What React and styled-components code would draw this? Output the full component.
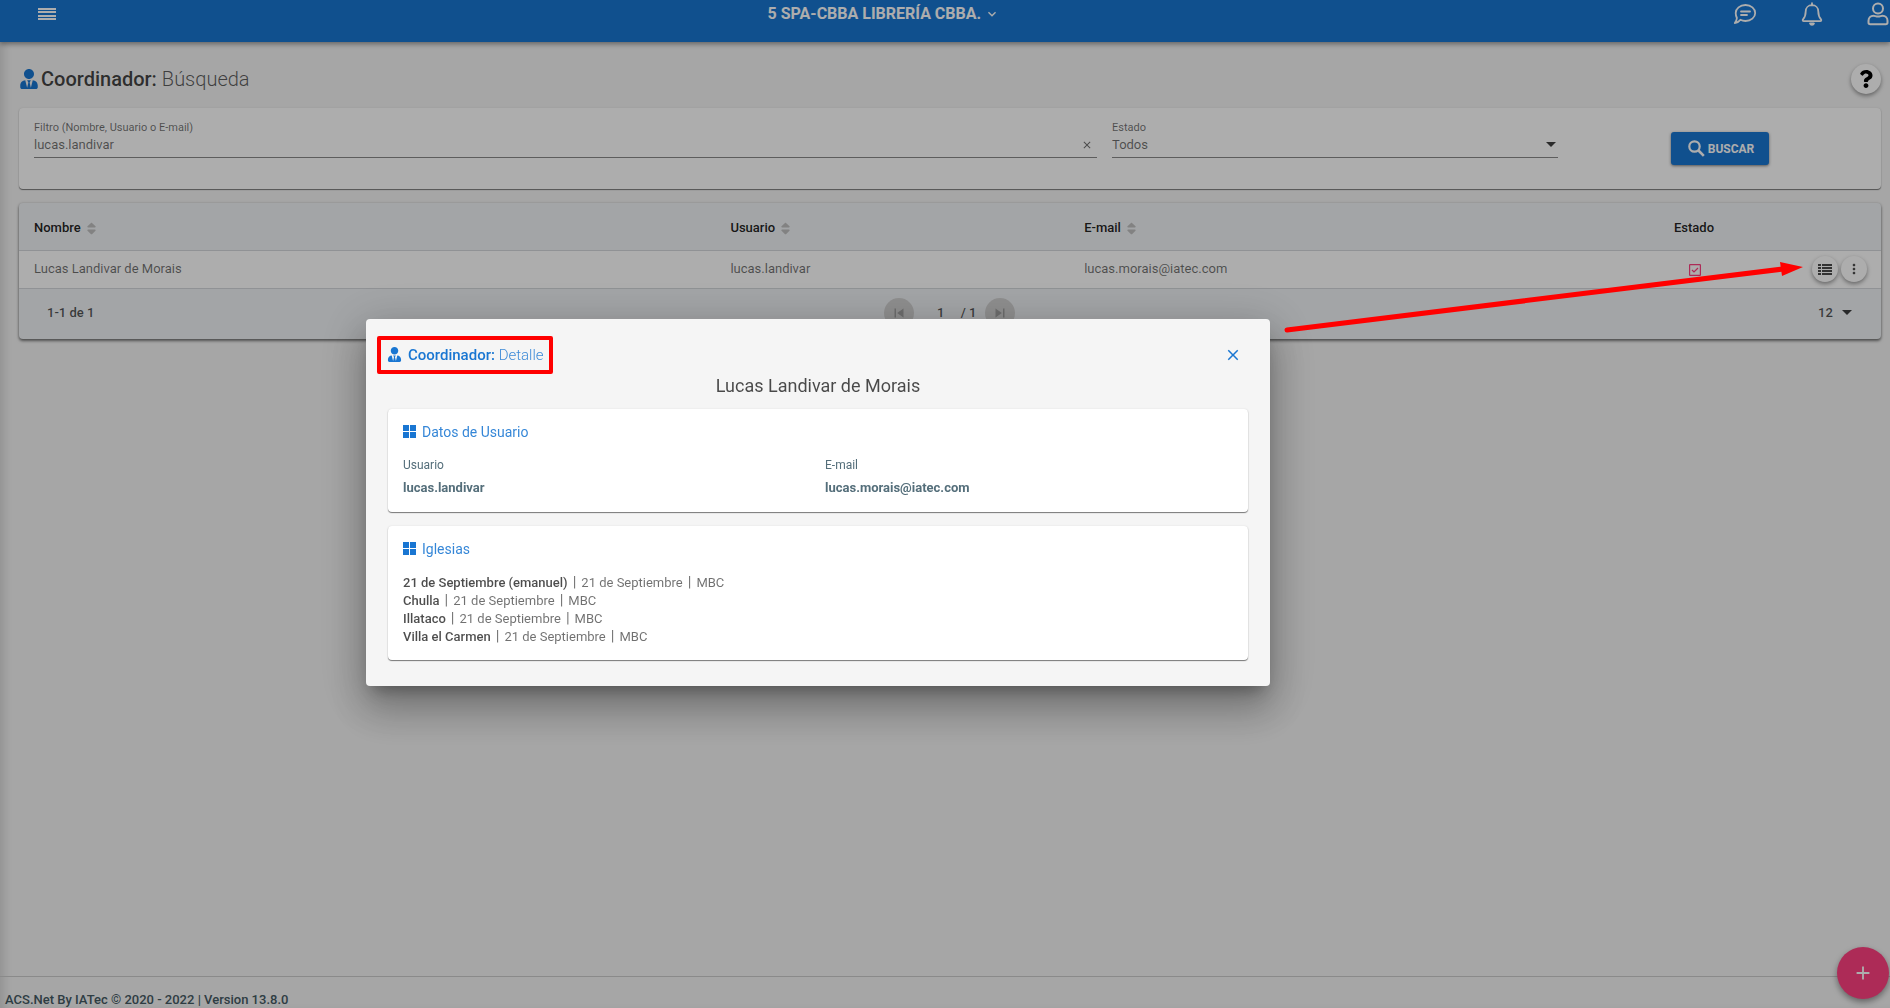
import React from "react";
import styled, { createGlobalStyle } from "styled-components";
import { FaUserTie, FaSort, FaQuestion } from "react-icons/fa";
import {
  MdMoreVert,
  MdClose,
  MdSkipPrevious,
  MdSkipNext,
  MdAdd,
  MdKeyboardArrowDown,
} from "react-icons/md";

const PRIMARY = "#1976d2";
const ACCENT = "#ff4081";
const ANNOTATION = "#ff0000";

const GlobalStyle = createGlobalStyle`
  *, *::before, *::after { box-sizing: border-box; }
  html, body { margin: 0; padding: 0; }
  body {
    background: #f5f5f5;
    color: rgba(0, 0, 0, 0.56);
    font-family: Roboto, "Liberation Sans", sans-serif;
    font-size: 13px;
    line-height: 18px;
  }
  button, input, select { font: inherit; color: inherit; }
  h1, h2, h3, p, ul, dl, dd { margin: 0; padding: 0; font-weight: 400; }
  svg { display: block; flex: none; }
`;

const Page = styled.div`
  min-height: 100vh;
  display: flex;
  flex-direction: column;
  box-shadow: inset 8px 0 10px -4px rgba(0, 0, 0, 0.12);
`;

const TopBar = styled.header`
  height: 42px;
  padding: 0 1px 14px 35px;
  display: grid;
  grid-template-columns: 736fr auto 893fr;
  align-items: center;
  background: ${PRIMARY};
  color: #fff;
  box-shadow: 0 2px 5px rgba(0, 0, 0, 0.4);
`;

const BarButton = styled.button`
  display: inline-flex;
  align-items: center;
  gap: 3px;
  padding: 0;
  border: 0;
  background: none;
  color: inherit;
  font-size: 16px;
  font-weight: 700;
  cursor: pointer;
`;

const BarActions = styled.nav`
  display: flex;
  justify-content: flex-end;
  align-items: center;
  gap: 44px;
`;

const Main = styled.main`
  flex: 1;
  padding: 22px 9px 22px 19px;
  display: flex;
  flex-direction: column;
`;

const TitleRow = styled.div`
  display: flex;
  justify-content: space-between;
  align-items: center;
  margin-bottom: 14px;
`;

const PageTitle = styled.h1`
  display: flex;
  align-items: center;
  gap: 2px;
  font-size: 20px;
  line-height: 30px;
  color: rgba(0, 0, 0, 0.74);
  b { font-weight: 500; }
  svg { color: ${PRIMARY}; }
`;

const Light = styled.span`
  font-weight: 300;
  opacity: 0.85;
`;

const RoundButton = styled.button`
  width: ${(p) => p.$size}px;
  height: ${(p) => p.$size}px;
  padding: 0;
  display: inline-flex;
  align-items: center;
  justify-content: center;
  border: 0;
  border-radius: 50%;
  background: ${(p) => p.$bg || "#fff"};
  color: ${(p) => p.$color || "rgba(0, 0, 0, 0.7)"};
  box-shadow: ${(p) => (p.$flat ? "none" : "0 2px 4px rgba(0, 0, 0, 0.4)")};
  cursor: pointer;
`;

const Card = styled.section`
  background: #fff;
  border-radius: 4px;
  box-shadow: 0 1px 1px rgba(0, 0, 0, 0.5), 0 0 2px rgba(0, 0, 0, 0.1);
`;

const FilterForm = styled.form`
  padding: 11px 14px 24px 15px;
  display: grid;
  grid-template-columns: 1063fr 446fr 294fr;
  column-gap: 15px;
  align-items: start;
`;

const Field = styled.div`
  display: flex;
  flex-direction: column;
  label { font-size: 11px; line-height: 17px; }
`;

const Control = styled.div`
  display: flex;
  align-items: center;
  height: 22px;
  padding: 0 2px 4px 0;
  border-bottom: 1px solid rgba(0, 0, 0, 0.46);
  input, select {
    flex: 1;
    min-width: 0;
    padding: 0;
    border: 0;
    outline: 0;
    background: none;
    appearance: none;
  }
`;

const PlainButton = styled.button`
  padding: 0 ${(p) => p.$pad || 0}px;
  border: 0;
  background: none;
  color: ${(p) => p.$color || "inherit"};
  cursor: pointer;
`;

const SubmitButton = styled.button`
  justify-self: center;
  margin-top: 13px;
  height: 33px;
  padding: 0 15px 0 17px;
  display: inline-flex;
  align-items: center;
  gap: 3px;
  border: 0;
  border-radius: 3px;
  background: ${PRIMARY};
  color: #fff;
  font-size: 12px;
  font-weight: 700;
  box-shadow: 0 1px 3px rgba(0, 0, 0, 0.5);
  cursor: pointer;
`;

const TableCard = styled(Card)`
  margin-top: 14px;
  background: #f0f3f6;
  box-shadow: 0 2px 3px rgba(0, 0, 0, 0.5), 0 0 3px rgba(0, 0, 0, 0.15);
`;

const Table = styled.table`
  width: 100%;
  table-layout: fixed;
  border-collapse: collapse;
`;

const Th = styled.th`
  width: ${(p) => p.$width || "auto"};
  height: 47px;
  padding: 4px 15px 0;
  text-align: ${(p) => p.$align || "left"};
  font-weight: 500;
  color: rgba(0, 0, 0, 0.87);
  border-bottom: 1px solid #d4d8dc;
`;

const SortLabel = styled.span`
  display: inline-flex;
  align-items: center;
  gap: 3px;
  svg { color: #c0c0c0; }
`;

const Td = styled.td`
  height: 38px;
  padding: 0 14px 0 15px;
  text-align: ${(p) => p.$align || "left"};
  background: #fff;
  border-bottom: 1px solid #d4d8dc;
`;

const StatusBox = styled.svg`
  display: inline-block;
  vertical-align: middle;
`;

const RowActions = styled.div`
  display: flex;
  justify-content: flex-end;
  gap: 3px;
`;

const TableFooter = styled.div`
  height: 50px;
  padding: 0 29px 2px 28px;
  display: grid;
  grid-template-columns: 1fr auto 1fr;
  align-items: center;
  font-weight: 500;
  color: rgba(0, 0, 0, 0.66);
`;

const Pager = styled.div`
  display: flex;
  align-items: center;
`;

const PageInput = styled.input`
  width: 47px;
  padding: 0 0 0 7px;
  border: 0;
  background: none;
  text-align: center;
`;

const PageTotal = styled.span`
  padding-right: 9px;
`;

const PageSize = styled.div`
  justify-self: end;
  display: flex;
  align-items: center;
  gap: 9px;
  select {
    padding: 0;
    border: 0;
    background: none;
    appearance: none;
  }
`;

const Footer = styled.footer`
  height: 32px;
  padding: 14px 5px 0;
  border-top: 1px solid #cccccc;
  font-weight: 500;
  color: #455a64;
`;

const Fab = styled(RoundButton)`
  position: fixed;
  right: 1px;
  bottom: 9px;
  box-shadow: 0 3px 6px rgba(0, 0, 0, 0.4);
`;

const Backdrop = styled.div`
  position: fixed;
  inset: 0;
  padding: 0 254px 4px 0;
  display: flex;
  justify-content: center;
  align-items: center;
  background: rgba(0, 0, 0, 0.32);
`;

const Dialog = styled.section`
  width: 904px;
  max-width: 100%;
  padding: 17px 22px 26px;
  border-radius: 4px;
  background: #f5f5f5;
  box-shadow: 0 11px 15px -7px rgba(0, 0, 0, 0.3), 0 24px 38px 3px rgba(0, 0, 0, 0.2),
    0 9px 46px 8px rgba(0, 0, 0, 0.16);
`;

const DialogHeader = styled.header`
  display: flex;
  justify-content: space-between;
  align-items: center;
  padding-right: 6px;
`;

const Highlight = styled.div`
  margin-left: -11px;
  height: 38px;
  padding: 0 5px 0 6px;
  display: flex;
  align-items: center;
  border: 4px solid ${ANNOTATION};
  border-radius: 2px;
`;

const DialogTitle = styled.h2`
  display: flex;
  align-items: center;
  gap: 6px;
  font-size: 15px;
  color: ${PRIMARY};
  b { font-weight: 500; }
`;

const PersonName = styled.p`
  margin-bottom: 12px;
  text-align: center;
  font-size: 18px;
  line-height: 23px;
  color: rgba(0, 0, 0, 0.7);
`;

const DetailCard = styled(Card)`
  padding: 14px 15px ${(p) => p.$bottom}px;
  & + & { margin-top: 14px; }
`;

const DetailHeading = styled.h3`
  display: flex;
  align-items: center;
  gap: 6px;
  margin-bottom: ${(p) => p.$space}px;
  font-size: 14px;
  color: ${PRIMARY};
  span { opacity: 0.88; }
`;

const DataList = styled.dl`
  display: grid;
  grid-template-columns: 1fr 1fr;
  column-gap: 14px;
  color: #546e7a;
  dt { font-size: 12px; line-height: 20px; }
  dd { line-height: 25px; font-weight: 700; }
`;

const ChurchList = styled.ul`
  list-style: none;
`;

const Church = styled.li`
  display: flex;
  line-height: 18px;
  b { font-weight: 500; color: rgba(0, 0, 0, 0.7); }
  > * + *::before { content: "|"; padding: 0 5px; font-size: 15px; line-height: 1; }
`;

const Arrow = styled.svg`
  position: fixed;
  left: 1280px;
  top: 255px;
  pointer-events: none;
`;

const ChatIcon = () => (
  <svg width="24" height="22" viewBox="0 0 24 22" fill="none" stroke="currentColor" strokeWidth="1.8" strokeLinecap="round" strokeLinejoin="round">
    <path d="M12.5 2C18 2 22.2 5.6 22.2 10s-4.2 8-9.700 8c-1.900 0-3.600-.4-5.100-1.200C6 18.600 4 20 1.800 20c1.400-1.600 2-3.200 2.100-5C3.200 13.500 2.700 11.800 2.700 10c0-4.400 4.300-8 9.800-8z" />
    <path d="M8 8.500h9M8 12h6" />
  </svg>
);

const BellIcon = () => (
  <svg width="22" height="24" viewBox="0 0 22 24" fill="none" stroke="currentColor" strokeWidth="1.8" strokeLinecap="round" strokeLinejoin="round">
    <path d="M11 1.200v2M11 3.200c-3.800 0-6.300 2.800-6.300 6.300 0 4.600-1.300 6.300-2.700 7.900-.6.700-.2 1.700.8 1.700h16.400c1 0 1.400-1 .8-1.700-1.400-1.600-2.700-3.300-2.700-7.900 0-3.500-2.500-6.300-6.300-6.300z" />
    <path d="M9 21.500c.4 1 1 1.300 2 1.300s1.600-.3 2-1.300z" />
  </svg>
);

const UserIcon = () => (
  <svg width="22" height="24" viewBox="0 0 22 24" fill="none" stroke="currentColor" strokeWidth="2" strokeLinejoin="round">
    <circle cx="11" cy="6.500" r="5" />
    <path d="M6.500 13.800c1.500 0 2.300.8 4.500.8s3-.8 4.500-.8c3 0 5 2.200 5 5v1.700c0 1-.8 1.700-1.700 1.700H3.200c-.9 0-1.700-.7-1.700-1.700v-1.700c0-2.800 2-5 5-5z" />
  </svg>
);

const SearchIcon = () => (
  <svg width="17" height="17" viewBox="0 0 17 17" fill="none" stroke="currentColor">
    <circle cx="6.500" cy="6.500" r="5.200" strokeWidth="2.200" />
    <path d="M10.500 10.500l5.300 5.300" strokeWidth="2.600" />
  </svg>
);

const ListIcon = () => (
  <svg width="14" height="11" viewBox="0 0 14 11" fill="currentColor">
    <path d="M0 0h3v2H0zM4 0h10v2H4zM0 3h3v2H0zM4 3h10v2H4zM0 6h3v2H0zM4 6h10v2H4zM0 9h3v2H0zM4 9h10v2H4z" />
  </svg>
);

const TilesIcon = () => (
  <svg width="13" height="13" viewBox="0 0 13 13" fill="currentColor">
    <path d="M0 0h6v6H0zM7 0h6v6H7zM0 7h6v6H0zM7 7h6v6H7z" />
  </svg>
);

const Caret = () => (
  <svg width="10" height="5" viewBox="0 0 10 5" fill="rgba(0, 0, 0, 0.75)">
    <path d="M0 0h10L5 5z" />
  </svg>
);

const churches = [
  ["21 de Septiembre (emanuel)", "21 de Septiembre", "MBC"],
  ["Chulla", "21 de Septiembre", "MBC"],
  ["Illataco", "21 de Septiembre", "MBC"],
  ["Villa el Carmen", "21 de Septiembre", "MBC"],
];

const SortableTh = ({ width, children }) => (
  <Th $width={width}>
    <SortLabel>
      {children}
      <FaSort size={15} />
    </SortLabel>
  </Th>
);

export default function App() {
  return (
    <>
      <GlobalStyle />
      <Page>
        <TopBar>
          <BarButton aria-label="Menú">
            <svg width="24" height="16" viewBox="0 0 24 16" fill="currentColor">
              <path d="M3 2h18v2H3zM3 5h18v2H3zM3 9h18v2H3zM3 12h18v2H3z" />
            </svg>
          </BarButton>
          <BarButton>
            5 SPA-CBBA LIBRERÍA CBBA.
            <MdKeyboardArrowDown size={16} />
          </BarButton>
          <BarActions>
            <BarButton aria-label="Mensajes"><ChatIcon /></BarButton>
            <BarButton aria-label="Notificaciones"><BellIcon /></BarButton>
            <BarButton aria-label="Perfil"><UserIcon /></BarButton>
          </BarActions>
        </TopBar>

        <Main>
          <TitleRow>
            <PageTitle>
              <FaUserTie size={20} />
              <span><b>Coordinador:</b> <Light>Búsqueda</Light></span>
            </PageTitle>
            <RoundButton $size={30} $color="#000" aria-label="Ayuda">
              <FaQuestion size={18} />
            </RoundButton>
          </TitleRow>

          <Card>
            <FilterForm onSubmit={(e) => e.preventDefault()}>
              <Field>
                <label htmlFor="filter">Filtro (Nombre, Usuario o E-mail)</label>
                <Control>
                  <input id="filter" defaultValue="lucas.landivar" />
                  <PlainButton type="button" $pad={2} aria-label="Limpiar"><MdClose size={12} /></PlainButton>
                </Control>
              </Field>
              <Field>
                <label htmlFor="status">Estado</label>
                <Control>
                  <select id="status"><option>Todos</option></select>
                  <Caret />
                </Control>
              </Field>
              <SubmitButton>
                <SearchIcon />
                BUSCAR
              </SubmitButton>
            </FilterForm>
          </Card>

          <TableCard>
            <Table>
              <thead>
                <tr>
                  <SortableTh width="37.4%">Nombre</SortableTh>
                  <SortableTh width="19%">Usuario</SortableTh>
                  <SortableTh>E-mail</SortableTh>
                  <Th $width="110px" $align="center">Estado</Th>
                  <Th $width="132px" aria-label="Acciones" />
                </tr>
              </thead>
              <tbody>
                <tr>
                  <Td>Lucas Landivar de Morais</Td>
                  <Td>lucas.landivar</Td>
                  <Td>lucas.morais@iatec.com</Td>
                  <Td $align="center">
                    <StatusBox width="12" height="12" viewBox="0 0 12 12" fill="none" stroke={ACCENT} strokeWidth="1.2">
                      <rect x=".6" y=".6" width="10.8" height="10.8" rx=".5" />
                      <path d="M3 6l2 2 4-4" />
                    </StatusBox>
                  </Td>
                  <Td>
                    <RowActions>
                      <RoundButton $size={26} aria-label="Detalle"><ListIcon /></RoundButton>
                      <RoundButton $size={26} aria-label="Más"><MdMoreVert size={16} /></RoundButton>
                    </RowActions>
                  </Td>
                </tr>
              </tbody>
            </Table>
            <TableFooter>
              <span>1-1 de 1</span>
              <Pager>
                <RoundButton $size={30} $bg="#d2d2d2" $color="#a0a0a0" $flat aria-label="Primera"><MdSkipPrevious size={18} /></RoundButton>
                <PageInput aria-label="Página" defaultValue="1" />
                <PageTotal>/ 1</PageTotal>
                <RoundButton $size={30} $bg="#d2d2d2" $color="#a0a0a0" $flat aria-label="Última"><MdSkipNext size={18} /></RoundButton>
              </Pager>
              <PageSize>
                <select aria-label="Filas por página"><option>12</option></select>
                <Caret />
              </PageSize>
            </TableFooter>
          </TableCard>
        </Main>

        <Footer>ACS.Net By IATec © 2020 - 2022 | Version 13.8.0</Footer>
        <Fab $size={52} $bg={ACCENT} $color="#fff" aria-label="Agregar"><MdAdd size={22} /></Fab>
      </Page>

      <Backdrop>
        <Dialog role="dialog" aria-labelledby="dialog-title">
          <DialogHeader>
            <Highlight>
              <DialogTitle id="dialog-title">
                <FaUserTie size={15} />
                <span><b>Coordinador:</b> <Light>Detalle</Light></span>
              </DialogTitle>
            </Highlight>
            <PlainButton $color={PRIMARY} aria-label="Cerrar"><MdClose size={18} /></PlainButton>
          </DialogHeader>
          <PersonName>Lucas Landivar de Morais</PersonName>
          <DetailCard $bottom={12}>
            <DetailHeading $space={14}><TilesIcon /><span>Datos de Usuario</span></DetailHeading>
            <DataList>
              <div><dt>Usuario</dt><dd>lucas.landivar</dd></div>
              <div><dt>E-mail</dt><dd>lucas.morais@iatec.com</dd></div>
            </DataList>
          </DetailCard>
          <DetailCard $bottom={14}>
            <DetailHeading $space={16}><TilesIcon /><span>Iglesias</span></DetailHeading>
            <ChurchList>
              {churches.map(([name, district, field]) => (
                <Church key={name}><b>{name}</b><span>{district}</span><span>{field}</span></Church>
              ))}
            </ChurchList>
          </DetailCard>
        </Dialog>
      </Backdrop>

      <Arrow width="530" height="82" viewBox="0 0 530 82" aria-hidden="true">
        <path d="M7 75L503 14" stroke={ANNOTATION} strokeWidth="5" strokeLinecap="round" />
        <path d="M523 12L500 7L502 21Z" fill={ANNOTATION} />
      </Arrow>
    </>
  );
}
